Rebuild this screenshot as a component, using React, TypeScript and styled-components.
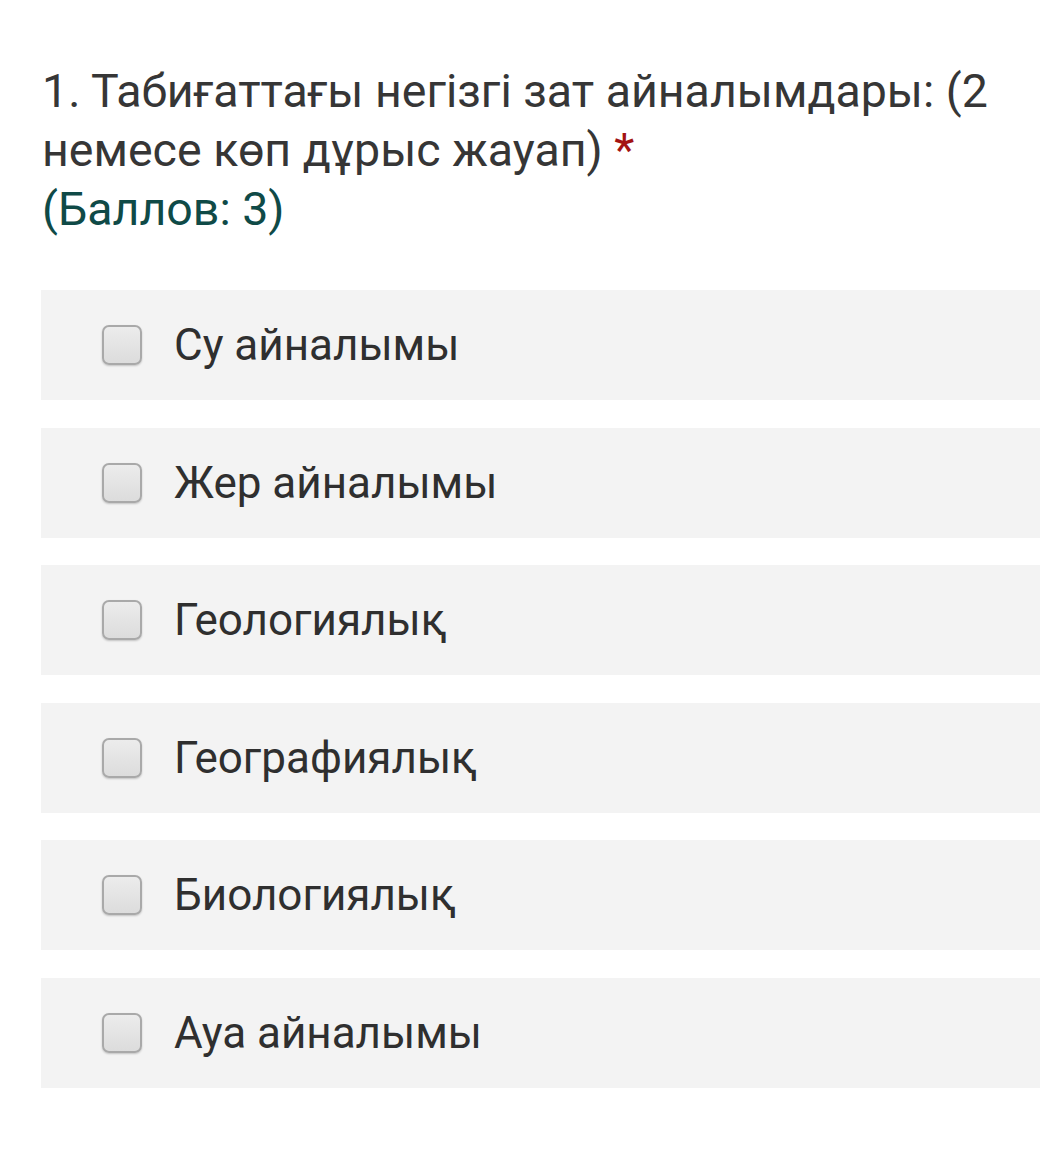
import * as React from "react"
import styled, { createGlobalStyle } from "styled-components"

const GlobalStyle = createGlobalStyle`
    html, body {
        margin: 0;
        padding: 0;
        background: #ffffff;
    }
    body {
        font-family: Roboto, "Noto Sans", "Liberation Sans", sans-serif;
    }
`

const options = ["Су айналымы", "Жер айналымы", "Геологиялық", "Географиялық", "Биологиялық", "Ауа айналымы"]

export default function App() {
    const [checked, setChecked] = React.useState<Record<number, boolean>>({})
    const toggle = (i: number) => setChecked(c => ({ ...c, [i]: !c[i] }))
    return (
        <>
            <GlobalStyle />
            <Page>
                <Question>
                    <QuestionText>
                        1. Табиғаттағы негізгі зат айналымдары: (2 немесе көп дұрыс жауап) <Required>*</Required>
                    </QuestionText>
                    <Points>(Баллов: 3)</Points>
                </Question>
                <OptionList>
                    {options.map((o, i) => (
                        <OptionRow key={o} onClick={() => toggle(i)}>
                            <CheckBox $checked={!!checked[i]} />
                            <OptionLabel>{o}</OptionLabel>
                        </OptionRow>
                    ))}
                </OptionList>
            </Page>
        </>
    )
}

const Page = styled.div`
    width: 1052px;
    min-height: 1170px;
    box-sizing: border-box;
    padding: 62px 12px 0 41px;
`

const Question = styled.div`
    font-size: 46.5px;
    line-height: 59px;
    color: #363636;
    padding-left: 1px;
`

const QuestionText = styled.div``

const Required = styled.span`
    color: #a31212;
`

const Points = styled.div`
    color: #0f4a47;
`

const OptionList = styled.div`
    display: flex;
    flex-direction: column;
    gap: 27.6px;
    margin-top: 51px;
`

const OptionRow = styled.div`
    height: 110px;
    background: #f3f3f3;
    display: flex;
    align-items: center;
    padding-left: 61px;
    cursor: pointer;
`

const CheckBox = styled.span<{ $checked: boolean }>`
    width: 40px;
    height: 40px;
    box-sizing: border-box;
    border: 2px solid #a9a9a9;
    border-radius: 7px;
    background: ${p => (p.$checked ? "#0f4a47" : "linear-gradient(#ececec, #dcdcdc)")};
    box-shadow: 0 1px 2px rgba(0, 0, 0, 0.2);
    flex-shrink: 0;
`

const OptionLabel = styled.span`
    margin-left: 32px;
    font-size: 44px;
    color: #2f2f2f;
`
